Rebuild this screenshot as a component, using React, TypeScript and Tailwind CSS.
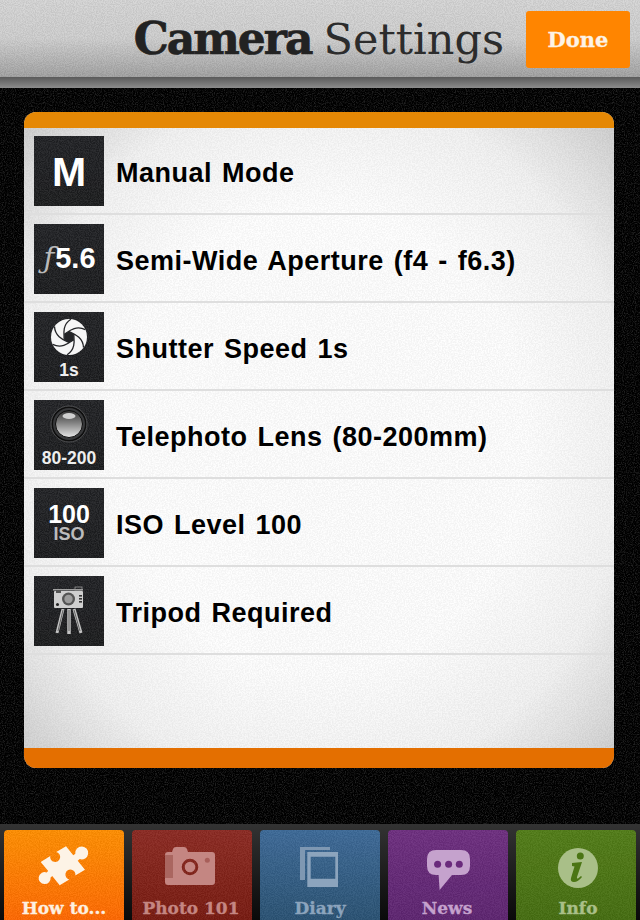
import React from "react";

const sans = "font-['Liberation_Sans',Arial,sans-serif]";
const slab = "font-['DejaVu_Serif',serif]";

function Noise({ id, opacity, freq = 0.9, offset = -1 }: { id: string; opacity: number; freq?: number; offset?: number }) {
  const m = `3 0 0 0 ${offset} 3 0 0 0 ${offset} 3 0 0 0 ${offset} 0 0 0 0 1`;
  return (
    <svg className="absolute inset-0 w-full h-full pointer-events-none" style={{ opacity }} aria-hidden="true">
      <filter id={id} colorInterpolationFilters="sRGB">
        <feTurbulence type="fractalNoise" baseFrequency={freq} numOctaves={2} seed={4} />
        <feColorMatrix type="matrix" values={m} />
      </filter>
      <rect width="100%" height="100%" filter={`url(#${id})`} />
    </svg>
  );
}

function Tile({ children, id }: { children: React.ReactNode; id: string }) {
  return (
    <div className="relative w-[70px] h-[70px] shrink-0 bg-gradient-to-b from-[#202124] to-[#1a1b1d] overflow-hidden flex flex-col items-center">
      <Noise id={id} opacity={0.07} />
      {children}
    </div>
  );
}

function Aperture() {
  const blades = [0, 60, 120, 180, 240, 300];
  return (
    <svg width="38" height="38" viewBox="-19 -19 38 38" className="absolute left-[16px] top-[5.5px]">
      <circle r="18" fill="#f6f6f6" />
      {blades.map((a) => (
        <path
          key={a}
          transform={`rotate(${a})`}
          d="M 0 -5.5 C 5 -3 14 0 14.500 10.500"
          fill="none"
          stroke="#232427"
          strokeWidth="1.300"
        />
      ))}
      <polygon points="0,-5.500 4.800,-2.750 4.800,2.750 0,5.500 -4.800,2.750 -4.800,-2.750" fill="#232427" />
    </svg>
  );
}

function Lens() {
  return (
    <svg width="40" height="40" viewBox="0 0 40 40" className="absolute left-[15px] top-[4px]">
      <defs>
        <linearGradient id="lensg" x1="0" y1="0" x2="0" y2="1">
          <stop offset="0" stopColor="#333333" />
          <stop offset="0.45" stopColor="#808080" />
          <stop offset="1" stopColor="#e8e8e8" />
        </linearGradient>
      </defs>
      <circle cx="20" cy="20" r="18" fill="#0e0e0e" stroke="#505153" strokeWidth="1" />
      <circle cx="20" cy="20" r="16" fill="#37383a" />
      <circle cx="20" cy="20" r="13.500" fill="url(#lensg)" stroke="#0c0c0c" strokeWidth="1" />
      <ellipse cx="20" cy="12" rx="6.500" ry="3" fill="#cfcfcf" />
    </svg>
  );
}

function Tripod() {
  return (
    <svg width="70" height="70" viewBox="0 0 70 70" className="absolute left-0 top-0">
      <rect x="19" y="13" width="30" height="1.500" fill="#a0a0a0" />
      <rect x="41" y="11" width="7" height="3" fill="none" stroke="#9a9a9a" strokeWidth="0.800" />
      <rect x="20" y="15" width="29" height="17" rx="1" fill="#cfcfcf" />
      <rect x="22" y="14" width="5" height="3" fill="#555555" />
      <circle cx="34.500" cy="23" r="6.500" fill="#555555" />
      <circle cx="34.500" cy="23" r="4.200" fill="#9c9c9c" />
      <circle cx="23.500" cy="28.500" r="1.500" fill="#222222" />
      <rect x="45" y="19" width="3" height="1.600" fill="#333333" />
      <rect x="45" y="22" width="3" height="1.600" fill="#333333" />
      <rect x="45" y="25" width="3" height="1.600" fill="#333333" />
      <path d="M29 33 L23 57" stroke="#c4c4c4" strokeWidth="3" />
      <path d="M35 33 L35 58" stroke="#c4c4c4" strokeWidth="3.500" />
      <path d="M40 33 L47 57" stroke="#c4c4c4" strokeWidth="3" />
      <path d="M29 34 L24 55" stroke="#4a4a4a" strokeWidth="0.800" />
      <path d="M35 34 L35 55" stroke="#4a4a4a" strokeWidth="0.800" />
      <path d="M40 34 L46 55" stroke="#4a4a4a" strokeWidth="0.800" />
    </svg>
  );
}

const rows: { label: string; icon: React.ReactNode }[] = [
  {
    label: "Manual Mode",
    icon: <span className={`${sans} relative font-bold text-white text-[41px] leading-[72px]`}>M</span>,
  },
  {
    label: "Semi-Wide Aperture (f4 - f6.3)",
    icon: (
      <span className="relative flex items-baseline leading-[70px] h-[70px] -mt-[1px] pl-[1px]">
        <span className="font-['DejaVu_Serif',serif] italic text-[#b9b9b9] text-[29px] font-normal mr-[1px]">ƒ</span>
        <span className={`${sans} font-bold text-white text-[29px]`}>5.6</span>
      </span>
    ),
  },
  {
    label: "Shutter Speed 1s",
    icon: (
      <>
        <Aperture />
        <span className={`${sans} absolute bottom-[2px] font-bold text-[#eeeeee] text-[17.5px] leading-[20px]`}>1s</span>
      </>
    ),
  },
  {
    label: "Telephoto Lens (80-200mm)",
    icon: (
      <>
        <Lens />
        <span className={`${sans} absolute bottom-[2px] font-bold text-[#eeeeee] text-[17.5px] leading-[20px]`}>80-200</span>
      </>
    ),
  },
  {
    label: "ISO Level 100",
    icon: (
      <div className={`${sans} relative font-bold flex flex-col items-center pt-[14px]`}>
        <span className="text-white text-[25px] leading-[24px]">100</span>
        <span className="text-[#bcbcbc] text-[18px] leading-[17px]">ISO</span>
      </div>
    ),
  },
  { label: "Tripod Required", icon: <Tripod /> },
];

function Puzzle() {
  return (
    <svg width="70" height="60" viewBox="0 0 70 60" className="block ml-[2px] mt-[8px]">
      <path
        fill="#fdf3e6"
        d="M10.700 24 L20.300 17.900 A5 5 0 1 0 26.300 14.100 L36 8.300 L43.300 17.300 L45.300 15.700 A6.500 6.500 0 1 1 49.700 21.100 L47.700 22.700 L55 31.700 L45.300 37.600 A5 5 0 1 0 39.300 41.400 L29.700 47.300 L22.200 38.100 L20.600 39.400 A6 6 0 1 1 16.600 34.400 L18.200 33.100 Z"
      />
    </svg>
  );
}

function CameraIcon() {
  return (
    <svg width="50" height="38" viewBox="0 0 50 38" className="block -ml-[4px] mt-[17px]">
      <path
        fill="#c48682"
        fillRule="evenodd"
        d="M3 5 H7 L8 2 Q8.500 0 11 0 H19 Q21 0 22 2 L23 5 H47 Q50 5 50 8 V35 Q50 38 47 38 H3 Q0 38 0 35 V8 Q0 5 3 5 Z M25 11.700 A8.300 8.300 0 1 0 25.010 28.300 A8.300 8.300 0 1 0 25 11.700 Z"
      />
      <rect x="0" y="8" width="8" height="23" fill="#aa6660" />
      <circle cx="25" cy="20" r="5.300" fill="#c48682" />
      <circle cx="42.300" cy="13.300" r="2.500" fill="#a85f5a" />
    </svg>
  );
}

function CopiesIcon() {
  return (
    <svg width="38" height="40" viewBox="0 0 38 40" className="block -ml-[2px] mt-[17px]">
      <path fill="#7f98b2" d="M0 0 H30 V3 H5 V33 H0 Z" />
      <path
        fill="#8ca4bd"
        fillRule="evenodd"
        d="M7.300 5 H38 V40 H7.300 Z M10.700 9.700 V31.700 H35.300 V9.700 Z"
      />
    </svg>
  );
}

function BubbleIcon() {
  return (
    <svg width="43" height="40" viewBox="0 0 43 40" className="block mt-[20px]">
      <path
        fill="#c5a2cd"
        d="M9 0 H34 Q43 0 43 9 V16 Q43 25 34 25 H25 L12.600 40 L11.600 25 H9 Q0 25 0 16 V9 Q0 0 9 0 Z"
      />
      <circle cx="10.600" cy="14.300" r="3.500" fill="#6a2a7c" />
      <circle cx="21.600" cy="14.300" r="3.500" fill="#6a2a7c" />
      <circle cx="32.300" cy="14.300" r="3.500" fill="#6a2a7c" />
    </svg>
  );
}

function InfoIcon() {
  return (
    <svg width="40" height="40" viewBox="0 0 40 40" className="block ml-[4px] mt-[18px]">
      <circle cx="20" cy="20" r="20" fill="#a9bf88" />
      <circle cx="22.300" cy="8" r="3.500" fill="#4b7514" />
      <path
        fill="#4b7514"
        d="M14 15 L24 14 L19 29 Q18.500 31 20 30.500 L23 28 L24 29 Q20 34 16 34 Q12 34 13 30 L16.500 18.500 L14 18 Z"
      />
    </svg>
  );
}

const tabs = [
  { label: "How to...", icon: <Puzzle />, bg: "bg-gradient-to-b from-[#ff8f00] to-[#ff6800]", text: "text-[#fdf0e0]", pad: "" },
  { label: "Photo 101", icon: <CameraIcon />, bg: "bg-gradient-to-b from-[#8c2a22] to-[#781a10]", text: "text-[#c48682]", pad: "pr-[2px]" },
  { label: "Diary", icon: <CopiesIcon />, bg: "bg-gradient-to-b from-[#3d6a98] to-[#2a5273]", text: "text-[#8ca4bd]", pad: "" },
  { label: "News", icon: <BubbleIcon />, bg: "bg-gradient-to-b from-[#6e2f80] to-[#5d2470]", text: "text-[#c5a2cd]", pad: "pr-[2px]" },
  { label: "Info", icon: <InfoIcon />, bg: "bg-gradient-to-b from-[#527d18] to-[#456d10]", text: "text-[#a9bf88]", pad: "pl-[4px]" },
];

export default function App() {
  return (
    <div className="relative w-[640px] h-[920px] bg-black overflow-hidden flex flex-col">
      <Noise id="bgnoise" opacity={0.13} offset={-1.3} />
      {/* header */}
      <header className="relative h-[77px] shrink-0 bg-gradient-to-b from-[#d6d6d6] via-[#cfcfcf] to-[#a2a2a2] flex items-center justify-end pr-[10px] overflow-hidden">
        <Noise id="hdnoise" opacity={0.06} />
        <h1 className="relative flex items-baseline mr-[22px] mt-[1px] text-[#222222] leading-none">
          <span className={`${slab} font-bold text-[44px] tracking-[-2px] [-webkit-text-stroke:0.7px_#222222]`}>Camera</span>
          <span className={`${slab} font-normal text-[43px] ml-[12px] text-[#2c2c2c]`}>Settings</span>
        </h1>
        <button className={`${slab} relative w-[104px] h-[57px] mt-[2px] rounded-[3px] bg-[#ff8500] text-[#fdf3e6] font-bold text-[21px] flex items-center justify-center [-webkit-text-stroke:0.3px_#fdf3e6]`}>
          Done
        </button>
      </header>
      <div className="relative h-[11px] shrink-0 bg-gradient-to-b from-[#5a5a5a] to-[#8c8c8c]" />

      {/* content */}
      <main className="relative flex-1 min-h-0 pl-[24px] pt-[24px] pr-[26px]">
        <section className="relative h-[656px] rounded-[12px] overflow-hidden flex flex-col bg-[radial-gradient(ellipse_at_center,#fefefe_50%,#f2f2f2_75%,#cccccc_100%)]">
          <Noise id="cardnoise" opacity={0.04} freq={0.7} />
          <div className="relative h-[16px] shrink-0 bg-[#e58805]" />
          <ul className="relative flex-1 min-h-0">
            {rows.map((r, i) => (
              <li key={r.label} className="h-[88px] pt-[8px] pl-[10px] flex items-start relative">
                <Tile id={`tile${i}`}>{r.icon}</Tile>
                <span className={`${sans} ml-[12px] h-[70px] pt-[5px] flex items-center font-bold text-[27px] text-black tracking-[0.5px] [word-spacing:2px]`}>
                  {r.label}
                </span>
                <div className="absolute left-0 right-0 bottom-[1px] h-[2px] bg-[#dedede]" />
              </li>
            ))}
          </ul>
          <div className="relative h-[20px] shrink-0 bg-[#e46f00]" />
        </section>
      </main>

      {/* tabs */}
      <nav className="relative h-[96px] shrink-0 bg-gradient-to-b from-[#333333] to-[#0a0a0a] pt-[6px] pl-[4px] flex gap-[8px]">
        {tabs.map((t, i) => (
          <div key={t.label} className={`relative w-[120px] h-[90px] rounded-t-[4px] overflow-hidden ${t.bg}`}>
            <Noise id={`tab${i}`} opacity={0.05} />
            <div className="relative h-[67px] flex justify-center items-start">{t.icon}</div>
            <div className={`${slab} relative text-center font-bold text-[17px] leading-[22px] [-webkit-text-stroke:0.3px_currentColor] ${t.text} ${t.pad}`}>{t.label}</div>
          </div>
        ))}
      </nav>
    </div>
  );
}
